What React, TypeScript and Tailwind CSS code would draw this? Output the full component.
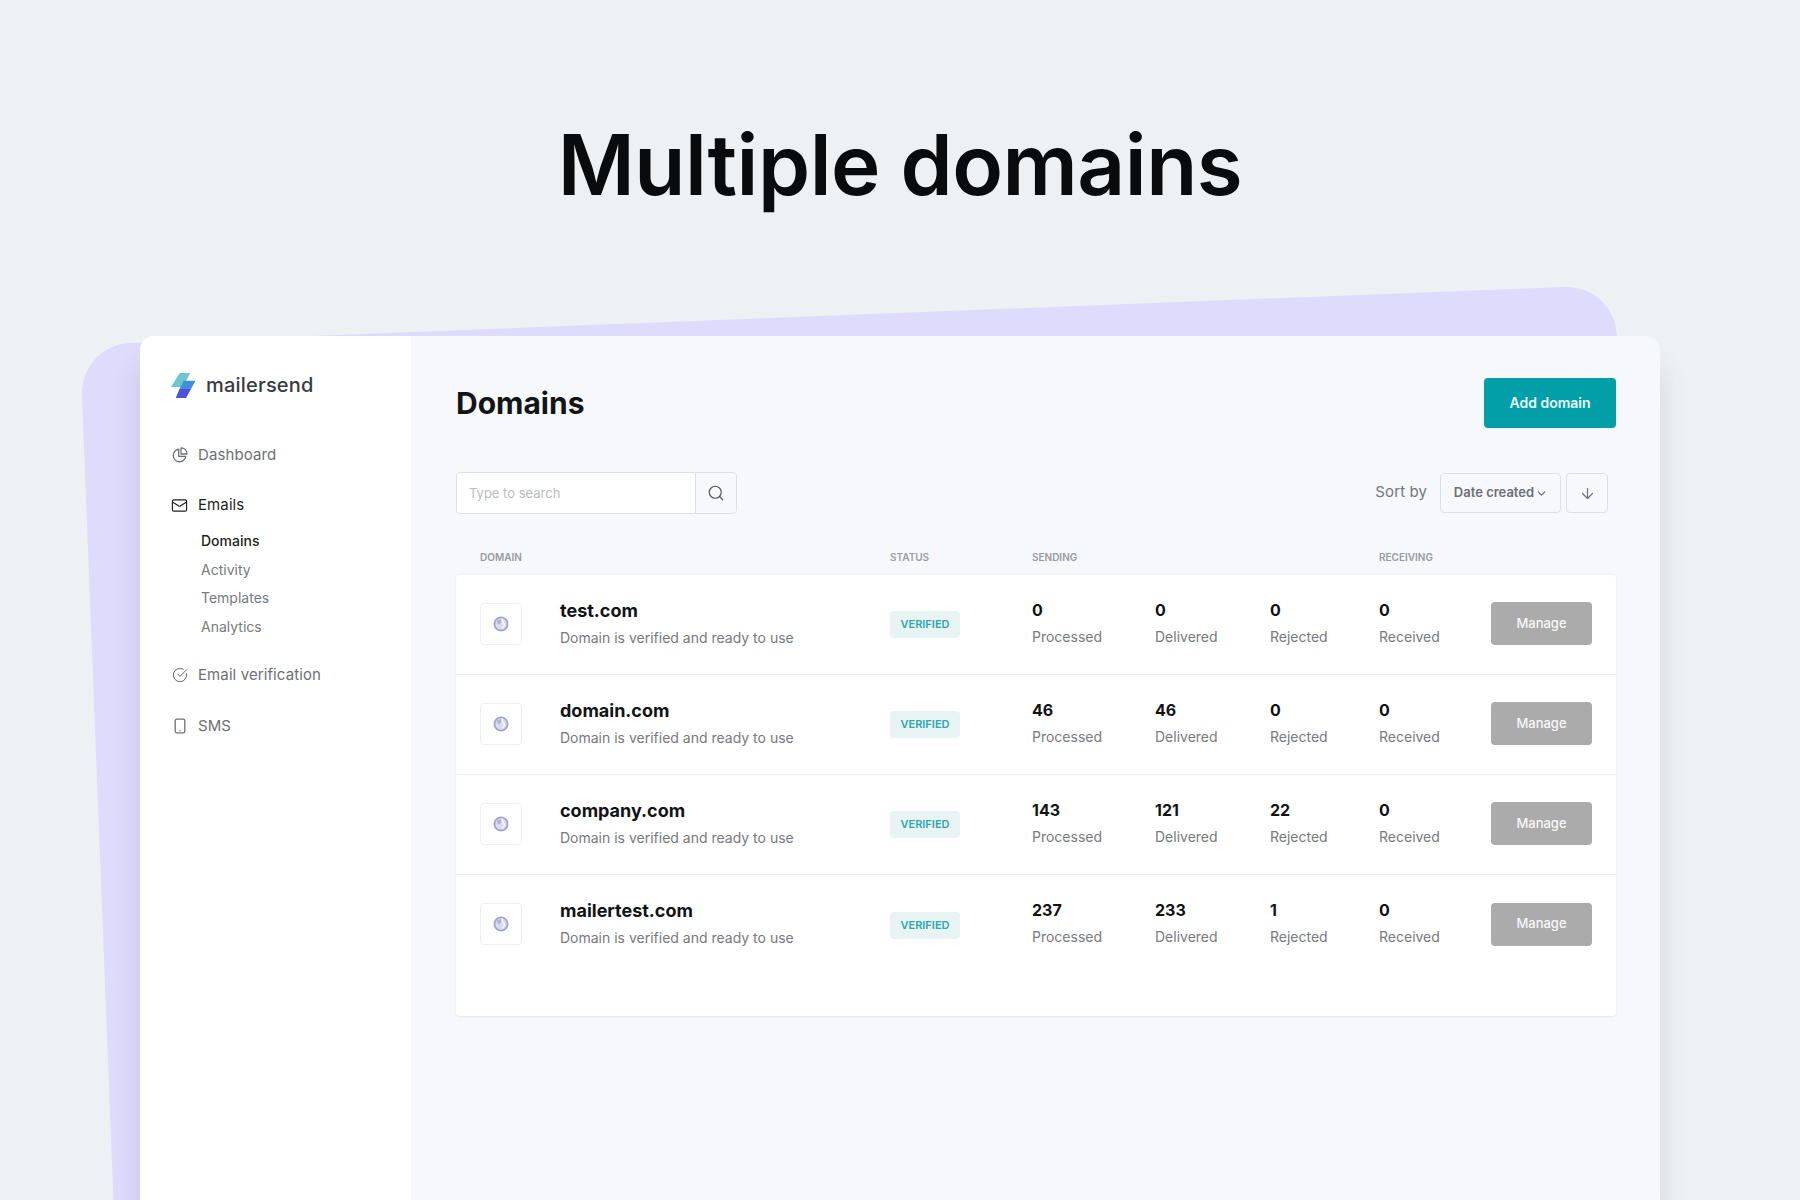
import { ArrowDown, ChevronDown, Mail, Search, CircleCheckBig } from "lucide-react";

const domains = [
  { name: "test.com", processed: 0, delivered: 0, rejected: 0 },
  { name: "domain.com", processed: 46, delivered: 46, rejected: 0 },
  { name: "company.com", processed: 143, delivered: 121, rejected: 22 },
  { name: "mailertest.com", processed: 237, delivered: 233, rejected: 1 },
];

function Logo() {
  return (
    <svg width="25" height="25" viewBox="0 0 25 25">
      <polygon points="8.7,0 19.3,0 12,14 0,14" fill="#6fc7cd" />
      <polygon points="12.7,7.7 24.5,7.7 20,16 8.5,16" fill="#3f8fdc" />
      <polygon points="8.5,16 20,16 15,25 4.8,25" fill="#4f4fdc" />
    </svg>
  );
}

function PieIcon() {
  return (
    <svg width="16" height="16" viewBox="0 0 16 16" fill="none" stroke="#6d7075" strokeWidth="1.3" strokeLinejoin="round">
      <path d="M6.7 2.2a6.3 6.3 0 1 0 7.1 7.1H6.7z" />
      <path d="M9 .9a6 6 0 0 1 6.1 6.1H9z" />
    </svg>
  );
}

function PhoneIcon() {
  return (
    <svg width="16" height="16" viewBox="0 0 16 16" fill="none" stroke="#6d7075" strokeWidth="1.3">
      <rect x="3.2" y="1.2" width="9.6" height="13.6" rx="1.6" />
      <path d="M7.4 12.6h1.2" />
    </svg>
  );
}

function GlobeIcon() {
  return (
    <svg width="16" height="16" viewBox="0 0 16 16" fill="none">
      <circle cx="8" cy="8" r="6.6" fill="#dcdcef" stroke="#a3a3cd" strokeWidth="1.8" />
      <path d="M4 4.6 7.6 3l.9 2.8-1.8 2.6L4 7z" fill="#b4b4d8" />
      <path d="M9.8 2.6Q8.4 5.6 11 7.6 12.4 9.6 9 12.4" stroke="#ffffff" strokeWidth="1.1" />
    </svg>
  );
}

function NavItem({ icon, label, active }: { icon: React.ReactNode; label: string; active?: boolean }) {
  return (
    <div className="flex h-[24px] items-center gap-[10px]">
      <span className="flex w-[17px] justify-center">{icon}</span>
      <span className={`text-[15px] tracking-[0.1px] ${active ? "text-[#1d1f22]" : "text-[#6d7075]"}`}>{label}</span>
    </div>
  );
}

function Stat({ value, label, width }: { value: number; label: string; width: string }) {
  return (
    <div className={`${width} pb-[2px]`}>
      <p className="text-[16px] leading-[26px] font-bold text-[#111315]">{value}</p>
      <p className="text-[14px] leading-[28px] text-[#77797d]">{label}</p>
    </div>
  );
}

export default function App() {
  return (
    <div className="relative h-[1200px] w-[1800px] overflow-hidden bg-[#edf1f4] font-[Inter,sans-serif]">
      {/* tilted panel behind the card */}
      <div className="absolute top-[345px] left-[80px] h-[1000px] w-[1536px] origin-top-left rotate-[-2.24deg] rounded-[50px] bg-[#dedbfc]"></div>

      <div className="relative h-[336px] pt-[113px] text-center">
        <h1 className="text-[83.6px] leading-[104px] font-semibold tracking-[-0.5px] text-[#0a0b0c]">Multiple domains</h1>
      </div>

      <div className="relative ml-[140px] flex h-[864px] w-[1520px] overflow-hidden rounded-t-[14px] bg-[#f6f8fc] shadow-[0_30px_28px_rgba(70,80,100,0.16)]">
        <aside className="w-[271px] bg-white pt-[37px] pl-[31px]">
          <div className="flex items-center gap-[10px]">
            <Logo />
            <span className="text-[20px] leading-[25px] font-medium tracking-[0.2px] text-[#3a3b3f]">mailersend</span>
          </div>
          <div className="mt-[45px]">
            <NavItem icon={<PieIcon />} label="Dashboard" />
          </div>
          <div className="mt-[26px]">
            <NavItem active icon={<Mail size={17} strokeWidth={1.6} color="#1d1f22" />} label="Emails" />
          </div>
          <div className="mt-[10px] flex flex-col pl-[30px] text-[14px] leading-[28.7px] text-[#777a7e]">
            <span className="font-medium text-[#1d1f22]">Domains</span>
            <span>Activity</span>
            <span>Templates</span>
            <span>Analytics</span>
          </div>
          <div className="mt-[21px]">
            <NavItem icon={<CircleCheckBig size={16} strokeWidth={1.5} color="#5f6267" />} label="Email verification" />
          </div>
          <div className="mt-[27px]">
            <NavItem icon={<PhoneIcon />} label="SMS" />
          </div>
        </aside>

        <main className="flex-1 pt-[42px] pr-[44px] pl-[45px]">
          <div className="flex items-start justify-between">
            <h2 className="pt-[7px] text-[30px] leading-[36px] font-bold text-[#131416]">Domains</h2>
            <button className="h-[50px] w-[132px] rounded-[4px] bg-[#029fa9] pb-[1px] text-[14px] font-semibold text-[#e9fbfb]">
              Add domain
            </button>
          </div>

          <div className="mt-[44px] flex items-center justify-between">
            <div className="flex h-[42px] w-[281px] rounded-[4px] border border-[#dcdfe5] bg-white">
              <span className="flex-1 pl-[12px] text-[13px] leading-[40px] text-[#b9bbbf]">Type to search</span>
              <span className="flex w-[41px] items-center justify-center rounded-r-[4px] border-l border-[#dcdfe5] bg-[#f6f8fc]">
                <Search size={18} strokeWidth={1.6} color="#55585c" />
              </span>
            </div>
            <div className="flex items-center pr-[8px]">
              <span className="mr-[13px] pb-[2px] text-[15px] tracking-[0.1px] text-[#74777b]">Sort by</span>
              <span className="flex h-[40px] w-[121px] items-center justify-center gap-[1px] rounded-[4px] border border-[#dcdfe5] pl-[1px] text-[13px] font-semibold text-[#6d7075]">
                Date created
                <ChevronDown size={13} strokeWidth={2.4} color="#6d7075" />
              </span>
              <span className="ml-[5px] flex h-[40px] w-[42px] items-center justify-center rounded-[4px] border border-[#dcdfe5]">
                <ArrowDown size={17} strokeWidth={1.7} color="#6d7075" />
              </span>
            </div>
          </div>

          <div className="mt-[33px] flex h-[28px] pl-[24px] text-[10px] leading-[20px] font-semibold text-[#9a9b9d]">
            <span className="w-[410px]">DOMAIN</span>
            <span className="w-[142px]">STATUS</span>
            <span className="w-[347px]">SENDING</span>
            <span>RECEIVING</span>
          </div>

          <div className="h-[442px] rounded-[4px] border-b border-b-[#e8eaee] bg-white shadow-[0_0_2px_rgba(120,130,150,0.12)]">
            {domains.map((d, i) => (
              <div
                key={d.name}
                className={`flex h-[100px] items-center px-[24px] ${i < 3 ? "border-b border-[#eef0f3]" : ""}`}
              >
                <div className="mb-[2px] w-[80px]">
                  <span className="flex h-[42px] w-[42px] items-center justify-center rounded-[4px] border border-[#eff0f4]">
                    <GlobeIcon />
                  </span>
                </div>
                <div className="w-[330px]">
                  <p className="text-[18px] leading-[26px] font-bold text-[#111315]">{d.name}</p>
                  <p className="text-[14px] leading-[28px] text-[#77797d]">Domain is verified and ready to use</p>
                </div>
                <div className="w-[142px]">
                  <span className="flex h-[27px] w-[70px] items-center justify-center rounded-[4px] bg-[#e8f3f4] text-[11px] font-semibold text-[#2ea7ad]">
                    VERIFIED
                  </span>
                </div>
                <Stat value={d.processed} label="Processed" width="w-[123px]" />
                <Stat value={d.delivered} label="Delivered" width="w-[115px]" />
                <Stat value={d.rejected} label="Rejected" width="w-[109px]" />
                <Stat value={0} label="Received" width="w-[112px]" />
                <button className="mb-[2px] h-[43px] w-[101px] rounded-[4px] bg-[#ababab] text-[13px] font-medium text-[#f7f7f7]">
                  Manage
                </button>
              </div>
            ))}
          </div>
        </main>
      </div>
    </div>
  );
}
